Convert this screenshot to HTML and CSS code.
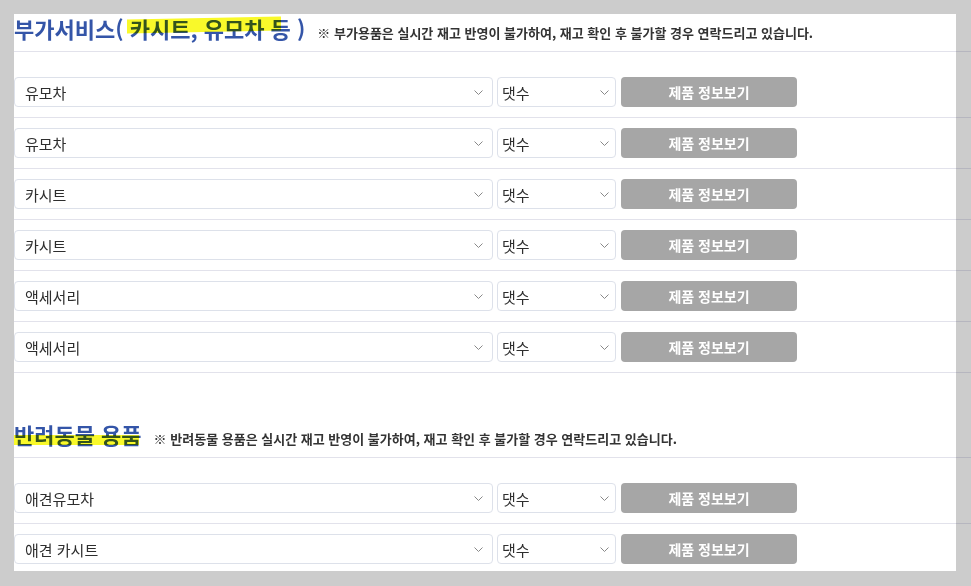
FILE: index.html
```html
<!DOCTYPE html>
<html lang="ko">
<head>
<meta charset="utf-8">
<title>부가서비스</title>
<link rel="stylesheet" href="styles.css">
</head>
<body>
<div class="panel">
  <section class="sec">
    <div class="sec-head">
      <h2 class="sec-title">부가서비스( <span class="hl hl-a">카시트, 유모차 등</span> )</h2>
      <p class="sec-note">※ 부가용품은 실시간 재고 반영이 불가하여, 재고 확인 후 불가할 경우 연락드리고 있습니다.</p>
    </div>
    <div class="rows">
      <div class="row">
        <div class="sel sel-item"><span>유모차</span><svg class="chev" viewBox="0 0 9 5"><path d="M0.5 0.5 L4.5 4.5 L8.5 0.5"/></svg></div>
        <div class="sel sel-qty"><span>댓수</span><svg class="chev" viewBox="0 0 9 5"><path d="M0.5 0.5 L4.5 4.5 L8.5 0.5"/></svg></div>
        <button class="btn">제품 정보보기</button>
      </div>
      <div class="row">
        <div class="sel sel-item"><span>유모차</span><svg class="chev" viewBox="0 0 9 5"><path d="M0.5 0.5 L4.5 4.5 L8.5 0.5"/></svg></div>
        <div class="sel sel-qty"><span>댓수</span><svg class="chev" viewBox="0 0 9 5"><path d="M0.5 0.5 L4.5 4.5 L8.5 0.5"/></svg></div>
        <button class="btn">제품 정보보기</button>
      </div>
      <div class="row">
        <div class="sel sel-item"><span>카시트</span><svg class="chev" viewBox="0 0 9 5"><path d="M0.5 0.5 L4.5 4.5 L8.5 0.5"/></svg></div>
        <div class="sel sel-qty"><span>댓수</span><svg class="chev" viewBox="0 0 9 5"><path d="M0.5 0.5 L4.5 4.5 L8.5 0.5"/></svg></div>
        <button class="btn">제품 정보보기</button>
      </div>
      <div class="row">
        <div class="sel sel-item"><span>카시트</span><svg class="chev" viewBox="0 0 9 5"><path d="M0.5 0.5 L4.5 4.5 L8.5 0.5"/></svg></div>
        <div class="sel sel-qty"><span>댓수</span><svg class="chev" viewBox="0 0 9 5"><path d="M0.5 0.5 L4.5 4.5 L8.5 0.5"/></svg></div>
        <button class="btn">제품 정보보기</button>
      </div>
      <div class="row">
        <div class="sel sel-item"><span>액세서리</span><svg class="chev" viewBox="0 0 9 5"><path d="M0.5 0.5 L4.5 4.5 L8.5 0.5"/></svg></div>
        <div class="sel sel-qty"><span>댓수</span><svg class="chev" viewBox="0 0 9 5"><path d="M0.5 0.5 L4.5 4.5 L8.5 0.5"/></svg></div>
        <button class="btn">제품 정보보기</button>
      </div>
      <div class="row">
        <div class="sel sel-item"><span>액세서리</span><svg class="chev" viewBox="0 0 9 5"><path d="M0.5 0.5 L4.5 4.5 L8.5 0.5"/></svg></div>
        <div class="sel sel-qty"><span>댓수</span><svg class="chev" viewBox="0 0 9 5"><path d="M0.5 0.5 L4.5 4.5 L8.5 0.5"/></svg></div>
        <button class="btn">제품 정보보기</button>
      </div>
    </div>
  </section>

  <section class="sec sec-pet">
    <div class="sec-head">
      <h2 class="sec-title"><span class="hl hl-b">반려동물 용품</span></h2>
      <p class="sec-note">※ 반려동물 용품은 실시간 재고 반영이 불가하여, 재고 확인 후 불가할 경우 연락드리고 있습니다.</p>
    </div>
    <div class="rows">
      <div class="row">
        <div class="sel sel-item"><span>애견유모차</span><svg class="chev" viewBox="0 0 9 5"><path d="M0.5 0.5 L4.5 4.5 L8.5 0.5"/></svg></div>
        <div class="sel sel-qty"><span>댓수</span><svg class="chev" viewBox="0 0 9 5"><path d="M0.5 0.5 L4.5 4.5 L8.5 0.5"/></svg></div>
        <button class="btn">제품 정보보기</button>
      </div>
      <div class="row">
        <div class="sel sel-item"><span>애견 카시트</span><svg class="chev" viewBox="0 0 9 5"><path d="M0.5 0.5 L4.5 4.5 L8.5 0.5"/></svg></div>
        <div class="sel sel-qty"><span>댓수</span><svg class="chev" viewBox="0 0 9 5"><path d="M0.5 0.5 L4.5 4.5 L8.5 0.5"/></svg></div>
        <button class="btn">제품 정보보기</button>
      </div>
    </div>
  </section>
</div>
</body>
</html>
```

FILE: styles.css
```css
* { box-sizing: border-box; }

html, body {
  margin: 0;
  padding: 0;
  background: #cccccc;
  font-family: "Noto Sans CJK KR", "Noto Sans", sans-serif;
  color: #333;
  overflow: hidden;
}

.panel {
  margin: 14px 0 0 14px;
  width: 942px;
  height: 557px;
  background: #fff;
}

.sec {
  width: 957px;
}

.sec-pet {
  margin-top: 47px;
}

.sec-head {
  display: flex;
  align-items: baseline;
  height: 38px;
  border-bottom: 1px solid rgba(60, 60, 120, 0.15);
}

.sec-title {
  margin: 0;
  font-size: 22px;
  line-height: 28px;
  font-weight: 700;
  color: #3455a8;
  white-space: nowrap;
}

.hl {
  position: relative;
}

.hl::after {
  content: "";
  position: absolute;
  background: #f9f92a;
  mix-blend-mode: multiply;
}

.hl-a::after {
  left: -3px;
  right: 10px;
  top: 6px;
  height: 14px;
  transform: skewY(-1.2deg);
}

.hl-b::after {
  left: 0;
  right: 3px;
  top: 17px;
  height: 10px;
}

.sec-note {
  margin: 0 0 0 12px;
  font-size: 13px;
  font-weight: 700;
  color: #333;
  white-space: nowrap;
}

.rows {
  padding-top: 15px;
}

.row {
  display: flex;
  align-items: center;
  padding: 10px 0;
  border-bottom: 1px solid rgba(60, 60, 120, 0.15);
}

.sel {
  display: flex;
  align-items: center;
  justify-content: space-between;
  height: 30px;
  border: 1px solid #dde1ea;
  border-radius: 4px;
  background: #fff;
  font-size: 15px;
  color: #2e2e2e;
}

.sel-item {
  width: 479px;
  padding: 0 9px 0 10px;
}

.sel-qty {
  width: 119px;
  margin-left: 4px;
  padding: 0 6px 0 4px;
}

.chev {
  width: 9px;
  height: 5px;
  fill: none;
  stroke: #888;
  stroke-width: 1;
}

.btn {
  margin-left: 5px;
  width: 176px;
  height: 30px;
  border: 0;
  border-radius: 4px;
  background: #a6a6a6;
  color: #fff;
  font-family: "Noto Sans CJK KR", "Noto Sans", sans-serif;
  font-size: 14px;
  font-weight: 700;
  padding: 0;
}
```
